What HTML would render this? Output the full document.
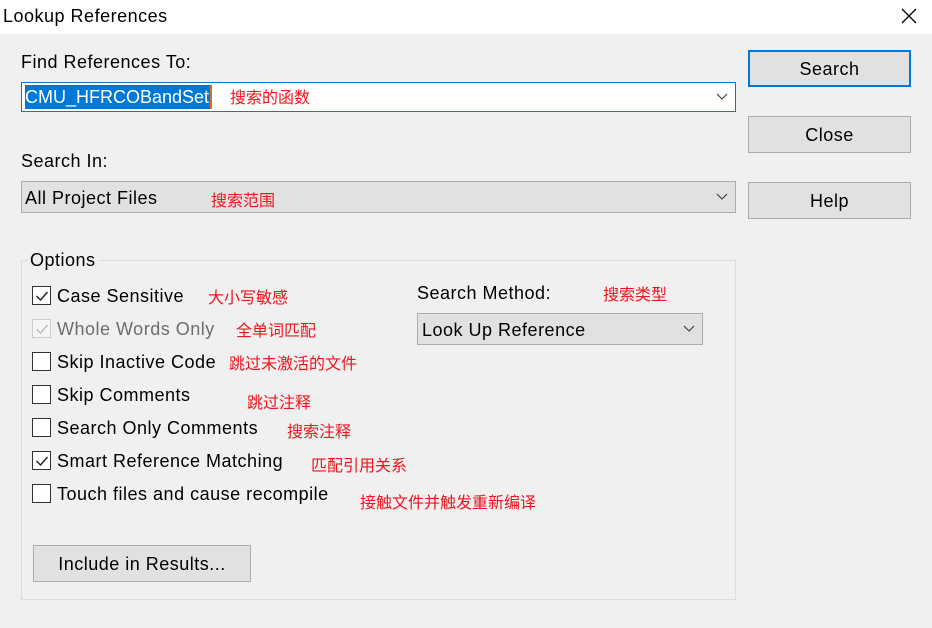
<!DOCTYPE html>
<html><head><meta charset="utf-8"><style>
*{box-sizing:border-box;margin:0;padding:0}
body{width:932px;height:628px;background:#f0f0f0;font-family:"Liberation Sans","Noto Sans CJK SC",sans-serif;font-size:18px;color:#000;position:relative;overflow:hidden;letter-spacing:0.5px}
.a{position:absolute;white-space:nowrap}
.r{position:absolute;color:#f0141e;font-size:16px;letter-spacing:0;font-family:"Liberation Sans","Noto Sans CJK SC",sans-serif;white-space:nowrap}
.btn{position:absolute;background:#e1e1e1;border:1px solid #adadad;text-align:center;font-size:18px}
.cb{position:absolute;width:19px;height:19px;border:1px solid #333;background:#fff}
.cb svg{position:absolute;left:2px;top:2px}
.chev{position:absolute;width:12px;height:8px}
</style></head><body>
<div class="a" style="left:0;top:0;width:932px;height:34px;background:#fff"></div>
<div class="a" style="left:3px;top:6px;font-size:18px">Lookup References</div>
<svg class="a" style="left:901px;top:8px" width="16" height="16"><path d="M1 1L15 15M15 1L1 15" stroke="#000" stroke-width="1.3"/></svg>

<div class="a" style="left:21px;top:52px">Find References To:</div>
<div class="a" style="left:21px;top:82px;width:715px;height:30px;background:#fff;border:1px solid #0078d7"></div>
<div class="a" style="left:25px;top:85px;height:24px;width:186px;background:#0078d7;color:#fff;line-height:25px;letter-spacing:0">CMU_HFRCOBandSet</div>
<div class="a" style="left:210px;top:85px;width:2px;height:24px;background:#e07020"></div>
<div class="r" style="left:230px;top:84px">搜索的函数</div>
<svg class="chev" style="left:716px;top:93px"><path d="M1 1L6 6L11 1" stroke="#333" fill="none"/></svg>

<div class="a" style="left:21px;top:151px">Search In:</div>
<div class="a" style="left:21px;top:181px;width:715px;height:32px;background:#e1e1e1;border:1px solid #adadad"></div>
<div class="a" style="left:25px;top:188px">All Project Files</div>
<div class="r" style="left:211px;top:187px">搜索范围</div>
<svg class="chev" style="left:716px;top:193px"><path d="M1 1L6 6L11 1" stroke="#333" fill="none"/></svg>

<div class="btn" style="left:748px;top:50px;width:163px;height:37px;border:2px solid #0078d7;line-height:34px">Search</div>
<div class="btn" style="left:748px;top:116px;width:163px;height:37px;line-height:36px">Close</div>
<div class="btn" style="left:748px;top:182px;width:163px;height:37px;line-height:36px">Help</div>

<div class="a" style="left:21px;top:260px;width:715px;height:340px;border:1px solid #dcdcdc"></div>
<div class="a" style="left:28px;top:250px;background:#f0f0f0;padding:0 2px">Options</div>

<div class="cb" style="left:32px;top:286px"><svg width="14" height="14"><path d="M1.5 7L5.5 11L12.5 3" stroke="#222" stroke-width="1.4" fill="none"/></svg></div>
<div class="a" style="left:57px;top:286px">Case Sensitive</div>
<div class="r" style="left:208px;top:284px">大小写敏感</div>

<div class="cb" style="left:32px;top:319px;border-color:#ccc;background:#f5f5f5"><svg width="14" height="14"><path d="M1.5 7L5.5 11L12.5 3" stroke="#bbb" stroke-width="1.4" fill="none"/></svg></div>
<div class="a" style="left:57px;top:319px;color:#6d6d6d">Whole Words Only</div>
<div class="r" style="left:236px;top:317px">全单词匹配</div>

<div class="cb" style="left:32px;top:352px"></div>
<div class="a" style="left:57px;top:352px">Skip Inactive Code</div>
<div class="r" style="left:229px;top:350px">跳过未激活的文件</div>

<div class="cb" style="left:32px;top:385px"></div>
<div class="a" style="left:57px;top:385px">Skip Comments</div>
<div class="r" style="left:247px;top:389px">跳过注释</div>

<div class="cb" style="left:32px;top:418px"></div>
<div class="a" style="left:57px;top:418px">Search Only Comments</div>
<div class="r" style="left:287px;top:418px">搜索注释</div>

<div class="cb" style="left:32px;top:451px"><svg width="14" height="14"><path d="M1.5 7L5.5 11L12.5 3" stroke="#222" stroke-width="1.4" fill="none"/></svg></div>
<div class="a" style="left:57px;top:451px">Smart Reference Matching</div>
<div class="r" style="left:311px;top:452px">匹配引用关系</div>

<div class="cb" style="left:32px;top:484px"></div>
<div class="a" style="left:57px;top:484px">Touch files and cause recompile</div>
<div class="r" style="left:360px;top:489px">接触文件并触发重新编译</div>

<div class="a" style="left:417px;top:283px">Search Method:</div>
<div class="r" style="left:603px;top:281px">搜索类型</div>
<div class="a" style="left:417px;top:313px;width:286px;height:32px;background:#e1e1e1;border:1px solid #adadad"></div>
<div class="a" style="left:422px;top:320px">Look Up Reference</div>
<svg class="chev" style="left:683px;top:325px"><path d="M1 1L6 6L11 1" stroke="#333" fill="none"/></svg>

<div class="btn" style="left:33px;top:545px;width:218px;height:37px;line-height:36px">Include in Results...</div>
</body></html>
